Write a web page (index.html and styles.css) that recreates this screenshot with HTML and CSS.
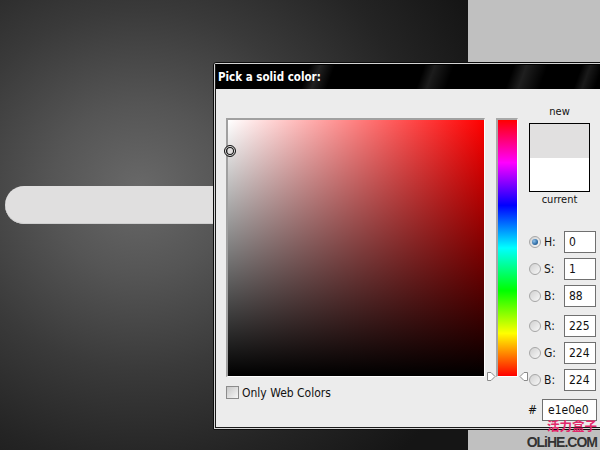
FILE: index.html
```html
<!DOCTYPE html>
<html>
<head>
<meta charset="utf-8">
<link rel="stylesheet" href="styles.css">
</head>
<body>
<div class="desk">
  <div class="panel-gray"></div>
  <div class="pill"></div>
  <div class="dialog">
    <div class="win">
      <div class="titlebar">Pick a solid color:</div>
      <div class="body">
        <div class="col-left">
          <div class="field"><div class="marker"></div></div>
          <div class="webonly"><span class="check"></span><span>Only Web Colors</span></div>
        </div>
        <div class="hue-wrap">
          <div class="hue"></div>
          <svg class="arrow arrow-l" width="9" height="9" viewBox="0 0 9 9"><polygon points="0.5,0.5 4,0.5 8,4.5 4,8.5 0.5,8.5" fill="#fff" stroke="#8a8a8a" stroke-width="1"/></svg>
          <svg class="arrow arrow-r" width="9" height="9" viewBox="0 0 9 9"><polygon points="8.5,0.5 5,0.5 1,4.5 5,8.5 8.5,8.5" fill="#fff" stroke="#8a8a8a" stroke-width="1"/></svg>
        </div>
        <div class="col-right">
          <div class="swatch-block">
            <div class="cap">new</div>
            <div class="swatch"><div class="sw-new"></div><div class="sw-cur"></div></div>
            <div class="cap cap-cur">current</div>
          </div>
          <div class="group group-first">
            <div class="row"><span class="radio on"></span><span class="lbl">H:</span><span class="inp">0</span></div>
            <div class="row"><span class="radio"></span><span class="lbl">S:</span><span class="inp">1</span></div>
            <div class="row"><span class="radio"></span><span class="lbl">B:</span><span class="inp">88</span></div>
          </div>
          <div class="group">
            <div class="row"><span class="radio"></span><span class="lbl">R:</span><span class="inp">225</span></div>
            <div class="row"><span class="radio"></span><span class="lbl">G:</span><span class="inp">224</span></div>
            <div class="row"><span class="radio"></span><span class="lbl">B:</span><span class="inp">224</span></div>
          </div>
          <div class="hexrow"><span class="hash">#</span><span class="inp inp-hex">e1e0e0</span></div>
        </div>
      </div>
    </div>
  </div>
  <div class="watermark">
    <div class="wm-cn">活力盒子</div>
    <div class="wm-en">OLiHE.COM</div>
  </div>
</div>
</body>
</html>
```
FILE: styles.css
```css
html, body {
  margin: 0;
  padding: 0;
}
body {
  width: 600px;
  height: 450px;
  overflow: hidden;
  font-family: "DejaVu Sans Condensed", "DejaVu Sans", sans-serif;
  font-stretch: condensed;
}
.desk {
  position: relative;
  width: 600px;
  height: 450px;
  overflow: hidden;
  background: radial-gradient(ellipse 380px 360px at 140px 190px, #696969 0, #555 90px, #3a3a3a 190px, #242424 290px, #151515 380px);
}
.panel-gray {
  position: absolute;
  left: 468px;
  top: 0;
  width: 132px;
  height: 450px;
  background: #c0c0c0;
}
.pill {
  position: absolute;
  left: 5px;
  top: 186px;
  width: 230px;
  height: 38px;
  border-radius: 19px 0 0 19px;
  background: #e0dfdf;
  box-shadow: inset 0 -1px 0 #cfcfcf;
}
.dialog {
  position: absolute;
  left: 213px;
  top: 62px;
  width: 400px;
  height: 364px;
  border: 1px solid #0c0c0c;
  border-radius: 3px 0 0 0;
  padding: 1px;
  background: #d4d4d4;
}
.win {
  height: 100%;
  box-sizing: border-box;
  border: 1px solid #1a1a1a;
  border-top-color: #000;
  background: #ececec;
  display: flex;
  flex-direction: column;
}
.titlebar {
  height: 24px;
  line-height: 24px;
  padding-left: 2px;
  color: #fff;
  font-weight: bold;
  font-size: 11.5px;
  background:
    linear-gradient(110deg, transparent 0, transparent 88px, rgba(255,255,255,0.13) 98px, transparent 112px, transparent 196px, rgba(255,255,255,0.11) 206px, transparent 224px, transparent 280px, rgba(255,255,255,0.12) 292px, transparent 312px, transparent 344px, rgba(255,255,255,0.10) 352px, transparent 364px),
    #000;
}
.body {
  flex: 1;
  display: flex;
  align-items: flex-start;
  padding: 16px 0 0 10px;
}
.col-left {
  margin-top: 13px;
  display: flex;
  flex-direction: column;
}
.field {
  position: relative;
  width: 256px;
  height: 256px;
  border-top: 2px solid #a0a0a0;
  border-left: 2px solid #a0a0a0;
  border-right: 1px solid #fff;
  border-bottom: 1px solid #fff;
  background:
    linear-gradient(to bottom, rgba(0,0,0,0), #000),
    linear-gradient(to right, #fff, #f00);
}
.marker {
  position: absolute;
  left: -4px;
  top: 25px;
  width: 10px;
  height: 10px;
  border: 1px solid #111;
  border-radius: 50%;
  box-shadow: inset 0 0 0 1px #f4f4f4, inset 0 0 0 2px #111;
}
.webonly {
  margin-top: 9px;
  display: flex;
  align-items: center;
  font-size: 12px;
  color: #111;
  height: 13px;
}
.check {
  width: 11px;
  height: 11px;
  border: 1px solid #8c8c8c;
  background: linear-gradient(135deg, #c8c8c8, #f6f6f6);
  margin-right: 3px;
}
.hue-wrap {
  position: relative;
  margin-top: 13px;
  margin-left: 11px;
}
.hue {
  width: 19px;
  height: 256px;
  border-top: 2px solid #a8a8a8;
  border-left: 2px solid #a8a8a8;
  border-right: 1px solid #fff;
  border-bottom: 1px solid #fff;
  background: linear-gradient(to bottom, #f00 0%, #f0f 16.67%, #00f 33.33%, #0ff 50%, #0f0 66.67%, #ff0 83.33%, #f00 100%);
}
.arrow {
  position: absolute;
  top: 254px;
}
.arrow-l { left: -9px; }
.arrow-r { left: 23px; }
.col-right {
  margin-left: 9px;
  width: 70px;
  display: flex;
  flex-direction: column;
}
.swatch-block {
  margin-left: 2px;
  width: 61px;
  display: flex;
  flex-direction: column;
}
.cap {
  text-align: center;
  font-size: 11px;
  line-height: 14px;
  color: #111;
}
.cap-cur { margin-top: 1px; }
.swatch {
  margin-top: 4px;
  border: 1px solid #000;
  display: flex;
  flex-direction: column;
}
.sw-new { height: 34px; background: #e1e0e0; }
.sw-cur { height: 33px; background: #fff; }
.group {
  display: flex;
  flex-direction: column;
  gap: 5px;
  margin-top: 8px;
}
.group-first { margin-top: 24px; }
.row {
  display: flex;
  align-items: center;
  height: 22px;
}
.radio {
  margin-left: 2px;
  width: 10px;
  height: 10px;
  border: 1px solid #a6a6a6;
  border-radius: 50%;
  background: linear-gradient(135deg, #d0d0d0, #f8f8f8);
  display: flex;
  align-items: center;
  justify-content: center;
}
.radio.on::after {
  content: "";
  width: 6px;
  height: 6px;
  border-radius: 50%;
  background: radial-gradient(circle at 35% 35%, #8fc1ea, #2f6da6 60%, #1c4a78);
}
.lbl {
  margin-left: 3px;
  width: 20px;
  font-size: 12px;
  color: #111;
}
.inp {
  box-sizing: border-box;
  width: 32px;
  height: 22px;
  line-height: 20px;
  padding-left: 4px;
  border: 1px solid #707070;
  background: #fff;
  font-size: 12px;
  color: #111;
}
.hexrow {
  margin-top: 8px;
  display: flex;
  align-items: center;
  justify-content: flex-end;
  gap: 5px;
}
.hash {
  font-size: 12px;
  color: #111;
}
.inp-hex {
  width: 55px;
  padding-left: 5px;
}
.watermark {
  position: absolute;
  right: 3px;
  top: 419px;
  display: flex;
  flex-direction: column;
  align-items: flex-end;
}
.wm-cn {
  font-family: "Noto Sans CJK SC", sans-serif;
  font-weight: bold;
  font-size: 12.5px;
  line-height: 14px;
  height: 14px;
  color: #e2286a;
}
.wm-en {
  margin-top: 3px;
  font-family: "Liberation Sans", Arial, sans-serif;
  font-weight: bold;
  font-size: 14px;
  line-height: 13px;
  height: 13px;
  color: #333;
  letter-spacing: -1px;
}
```
